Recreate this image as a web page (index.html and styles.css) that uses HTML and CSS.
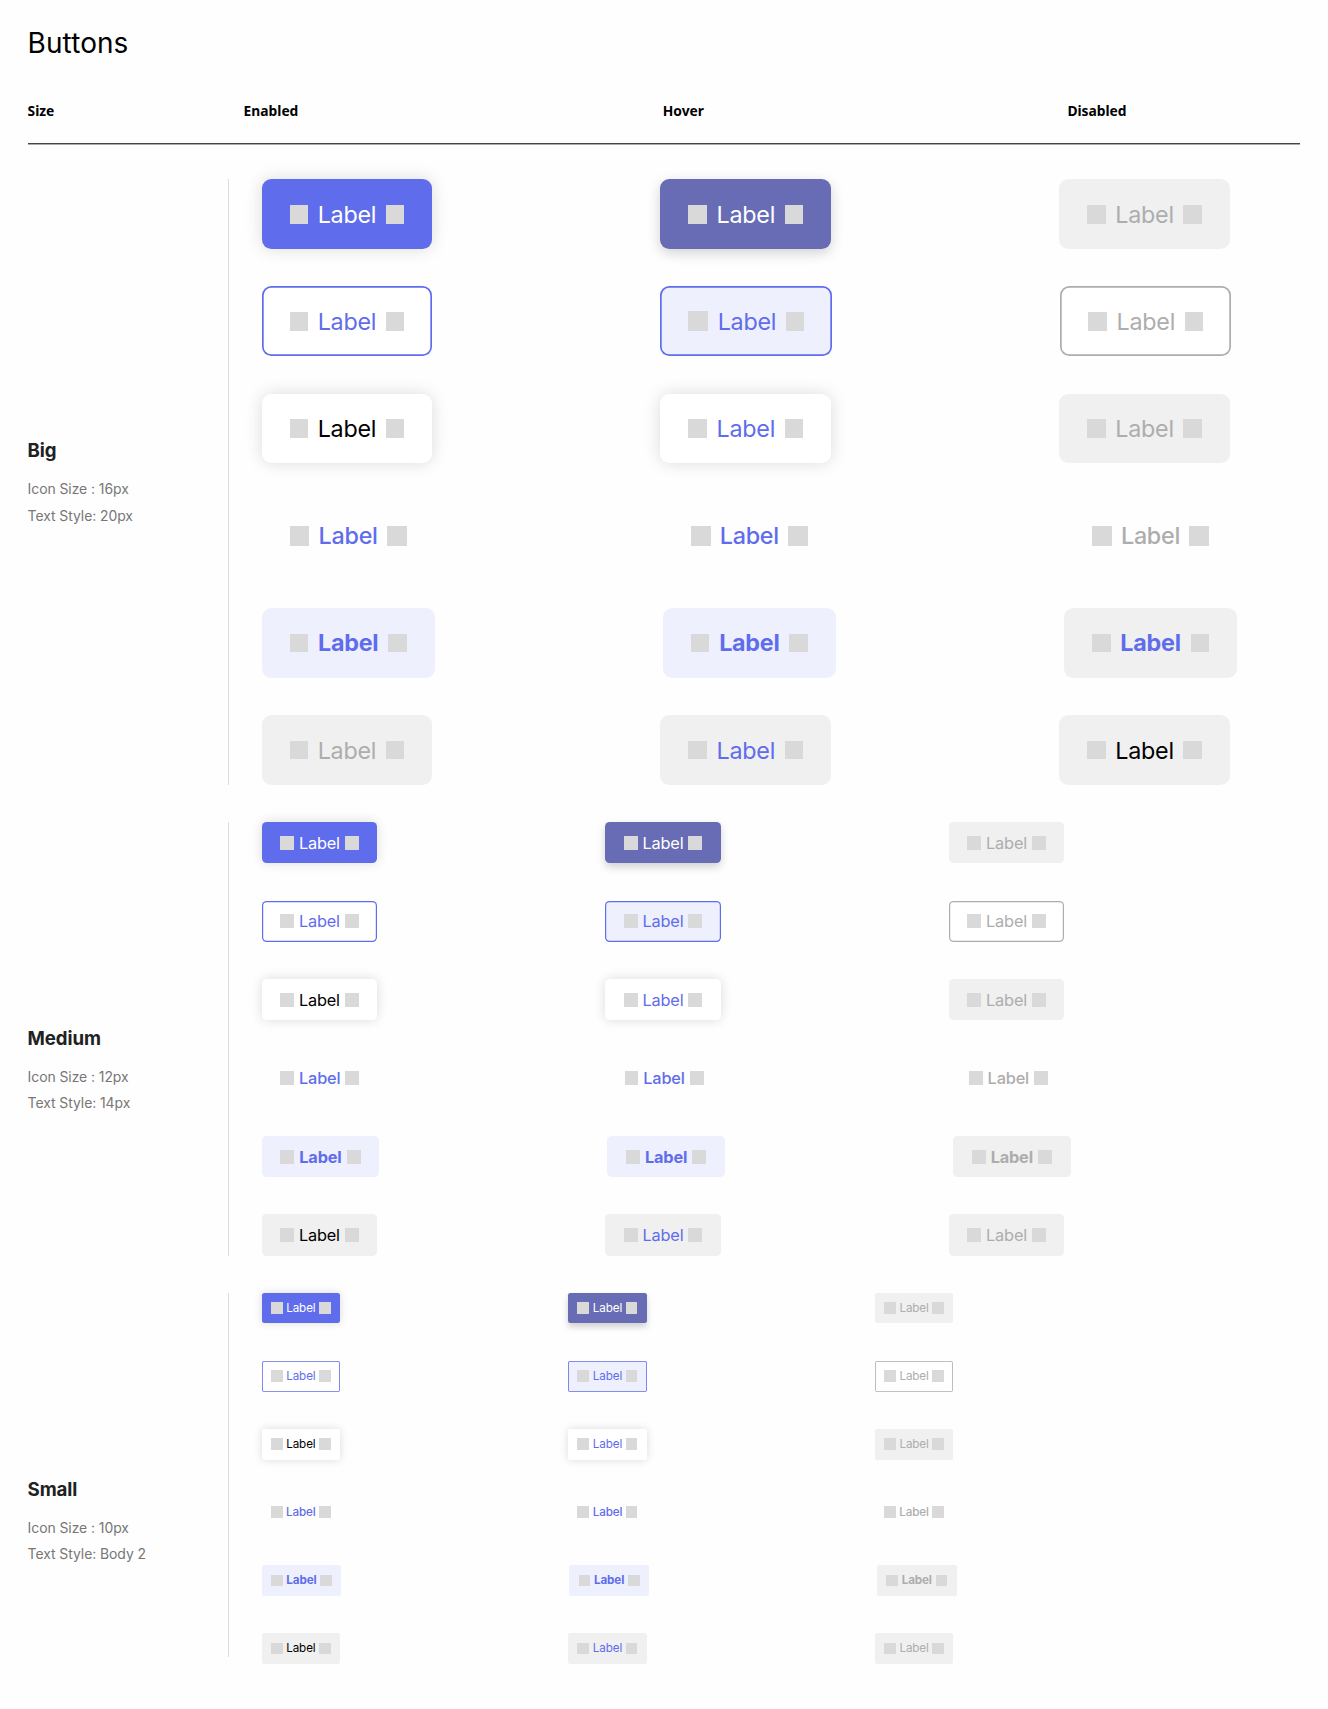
FILE: index.html
```html
<!DOCTYPE html>
<html lang="en">
<head>
<meta charset="utf-8">
<title>Buttons</title>
<link rel="stylesheet" href="styles.css">
</head>
<body>
<main class="page">
  <h1 class="title">Buttons</h1>
  <header class="head"><span>Size</span><span>Enabled</span><span>Hover</span><span>Disabled</span></header>

  <section class="group big">
    <div class="info"><h2>Big</h2><p>Icon Size : 16px</p><p>Text Style: 20px</p></div>
    <div class="rows">
      <div class="row"><button class="btn primary"><i></i>Label<i></i></button><button class="btn primary-hover"><i></i>Label<i></i></button><button class="btn muted"><i></i>Label<i></i></button></div>
      <div class="row"><button class="btn outline"><i></i>Label<i></i></button><button class="btn outline tint roomy"><i></i>Label<i></i></button><button class="btn outline off"><i></i>Label<i></i></button></div>
      <div class="row"><button class="btn raised dark"><i></i>Label<i></i></button><button class="btn raised"><i></i>Label<i></i></button><button class="btn muted"><i></i>Label<i></i></button></div>
      <div class="row medium-weight"><button class="btn"><i></i>Label<i></i></button><button class="btn"><i></i>Label<i></i></button><button class="btn off"><i></i>Label<i></i></button></div>
      <div class="row bold"><button class="btn tint"><i></i>Label<i></i></button><button class="btn tint"><i></i>Label<i></i></button><button class="btn grey"><i></i>Label<i></i></button></div>
      <div class="row"><button class="btn muted"><i></i>Label<i></i></button><button class="btn grey"><i></i>Label<i></i></button><button class="btn grey dark"><i></i>Label<i></i></button></div>
    </div>
  </section>

  <section class="group medium">
    <div class="info"><h2>Medium</h2><p>Icon Size : 12px</p><p>Text Style: 14px</p></div>
    <div class="rows">
      <div class="row"><button class="btn primary"><i></i>Label<i></i></button><button class="btn primary-hover"><i></i>Label<i></i></button><button class="btn muted"><i></i>Label<i></i></button></div>
      <div class="row"><button class="btn outline"><i></i>Label<i></i></button><button class="btn outline tint"><i></i>Label<i></i></button><button class="btn outline off"><i></i>Label<i></i></button></div>
      <div class="row"><button class="btn raised dark"><i></i>Label<i></i></button><button class="btn raised"><i></i>Label<i></i></button><button class="btn muted"><i></i>Label<i></i></button></div>
      <div class="row medium-weight"><button class="btn"><i></i>Label<i></i></button><button class="btn"><i></i>Label<i></i></button><button class="btn off"><i></i>Label<i></i></button></div>
      <div class="row bold"><button class="btn tint"><i></i>Label<i></i></button><button class="btn tint"><i></i>Label<i></i></button><button class="btn muted"><i></i>Label<i></i></button></div>
      <div class="row"><button class="btn grey dark"><i></i>Label<i></i></button><button class="btn grey"><i></i>Label<i></i></button><button class="btn muted"><i></i>Label<i></i></button></div>
    </div>
  </section>

  <section class="group small">
    <div class="info"><h2>Small</h2><p>Icon Size : 10px</p><p>Text Style: Body 2</p></div>
    <div class="rows">
      <div class="row"><button class="btn primary"><i></i>Label<i></i></button><button class="btn primary-hover"><i></i>Label<i></i></button><button class="btn muted"><i></i>Label<i></i></button></div>
      <div class="row"><button class="btn outline"><i></i>Label<i></i></button><button class="btn outline tint"><i></i>Label<i></i></button><button class="btn outline off"><i></i>Label<i></i></button></div>
      <div class="row"><button class="btn raised dark"><i></i>Label<i></i></button><button class="btn raised"><i></i>Label<i></i></button><button class="btn muted"><i></i>Label<i></i></button></div>
      <div class="row medium-weight"><button class="btn"><i></i>Label<i></i></button><button class="btn"><i></i>Label<i></i></button><button class="btn off"><i></i>Label<i></i></button></div>
      <div class="row bold"><button class="btn tint"><i></i>Label<i></i></button><button class="btn tint"><i></i>Label<i></i></button><button class="btn muted"><i></i>Label<i></i></button></div>
      <div class="row"><button class="btn grey dark"><i></i>Label<i></i></button><button class="btn grey"><i></i>Label<i></i></button><button class="btn muted"><i></i>Label<i></i></button></div>
    </div>
  </section>
</main>
</body>
</html>
```
FILE: styles.css
```css
/* 1rem is ten units of the spacing scale */
html { font-size: 11.65px; }
* { box-sizing: border-box; margin: 0; padding: 0; }
body { background: #fefefe; font-family: Inter, sans-serif; color: #000; }

.page { padding: 25.6px 27.6px 0; height: 1709px; overflow: hidden; }
.title { font-size: 2.4rem; font-weight: 400; line-height: 34px; letter-spacing: .1px; }

.head {
  display: grid;
  grid-template-columns: 216px 419.2px 404.6px 1fr;
  align-items: center;
  margin-top: 18.4px;
  padding-top: 2px;
  height: 66px;
  border-bottom: 1px solid #444;
  box-shadow: 0 1px 0 #aaa;
  font: 700 13.8px/20px "Noto Sans", sans-serif;
}

.group { display: flex; }
.info { width: 200.4px; }
.info h2 { font-size: 1.6rem; line-height: 22px; font-weight: 700; letter-spacing: -.1px; color: #202122; margin-bottom: 14.4px; }
.info p { font-size: 1.2rem; line-height: 26.8px; font-weight: 400; letter-spacing: -.08px; color: #777; }
.rows {
  flex: 1;
  display: flex;
  flex-direction: column;
  gap: 3.2rem;
  padding-left: 32.6px;
  border-left: 1px solid #dcdcdc;
}
.row { display: flex; gap: 228px; }

.btn {
  display: flex;
  flex: none;
  align-items: center;
  justify-content: space-between;
  width: var(--width);
  border: 0;
  background: none;
  font-family: inherit;
  font-weight: 400;
  letter-spacing: -.01em;
  color: #5f6dec;
}
.btn i { flex: none; background: #d9d9d9; }
.medium-weight .btn { font-weight: 500; }
.bold .btn { font-weight: 700; }

.primary { background: #5f6dec; color: #fff; box-shadow: 0 0 var(--blur) rgba(0, 0, 0, .14); }
.primary-hover { background: #676cb4; color: #fff; box-shadow: 0 4px calc(var(--blur) * .75) rgba(0, 0, 0, .18); }
.raised { background: #fff; box-shadow: 0 0 var(--blur) rgba(0, 0, 0, .14); }
.outline { background: #fff; box-shadow: inset 0 0 0 var(--line) currentColor; }
.tint { background: #eef0fd; }
.grey, .muted { background: #f0f0f0; }
.muted, .off { color: #adadad; }
.dark { color: #000; }

.big { margin-top: 35.3px; }
.big .info { padding-top: 260.2px; }
.big .btn { --width: 170.8px; --line: 1.7px; --blur: 17px; height: 6rem; padding: 0 2.4rem; border-radius: .8rem; font-size: 2rem; }
.big i { width: 1.6rem; height: 1.6rem; }
.big .roomy { --width: 172px; }
.big .roomy i:first-child, .big .medium-weight i { width: 1.7rem; height: 1.7rem; }
.big .medium-weight .btn, .big .bold .btn { --width: 173.2px; }

.medium { margin-top: 3.2rem; }
.medium .info { padding-top: 205px; }
.medium .btn { --width: 115.6px; --line: 1.2px; --blur: 12px; height: 41.2px; padding: 0 1.6rem; border-radius: .4rem; font-size: 1.4rem; }
.medium i { width: 1.2rem; height: 1.2rem; }
.medium .medium-weight .btn { --width: 116.3px; }
.medium .bold .btn { --width: 117.7px; }

.small { margin-top: 37px; }
.small .info { padding-top: 185.6px; }
.small .rows { height: 364.7px; }
.small .btn { --width: 78.6px; --line: .8px; --blur: 9px; height: 30.8px; padding: 0 .8rem; border-radius: .2rem; font-size: 1rem; }
.small i { width: 1rem; height: 1rem; }
.small .bold .btn { --width: 79.7px; }
```
